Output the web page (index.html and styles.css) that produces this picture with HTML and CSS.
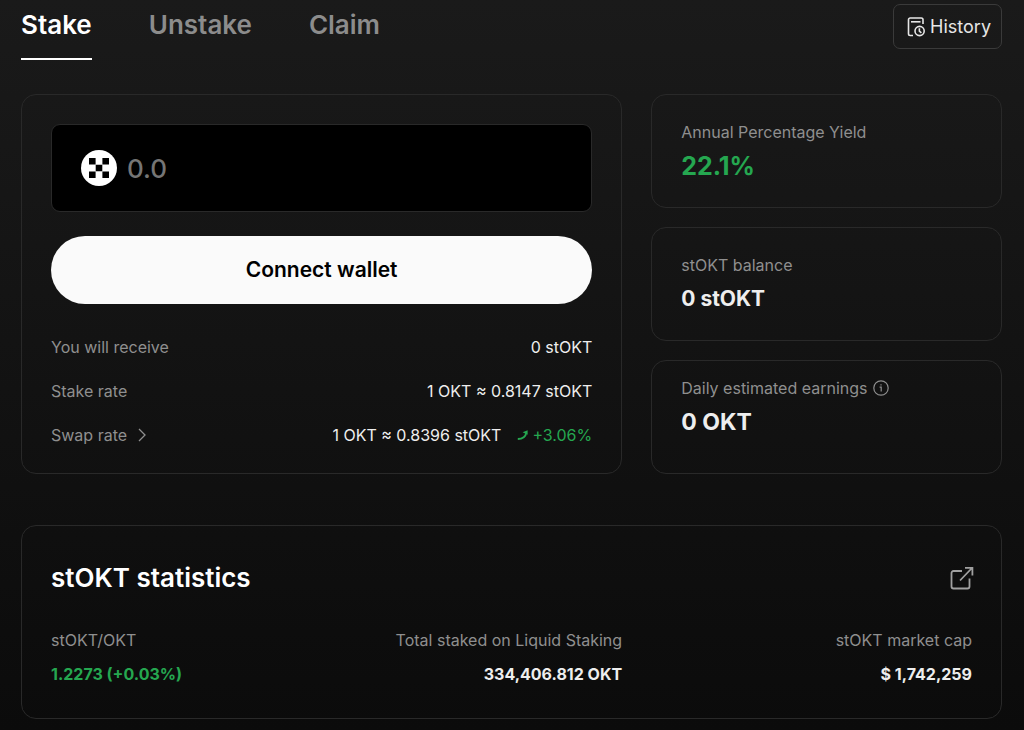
FILE: index.html
```html
<!DOCTYPE html>
<html lang="en">
<head>
    <meta charset="UTF-8">
    <meta name="viewport" content="width=device-width, initial-scale=1.0">
    <title>Liquid Staking</title>
    <link rel="stylesheet" href="styles.css">
</head>
<body>
    <header class="header">
        <nav class="tabs">
            <a href="#stake" class="tab active">Stake</a>
            <a href="#unstake" class="tab">Unstake</a>
            <a href="#claim" class="tab">Claim</a>
        </nav>
        <button class="history-button" type="button">
            <svg width="18" height="20" viewBox="0 0 18 20" fill="none" stroke="currentColor" stroke-width="1.6">
                <path d="M6 18.5H3.2A1.7 1.7 0 0 1 1.5 16.8V2.7A1.7 1.7 0 0 1 3.2 1H14.3A1.7 1.7 0 0 1 16 2.7V7"/>
                <path d="M4 4.8H13.5"/>
                <circle cx="12.6" cy="14" r="4.6"/>
                <path d="M12.4 11.2V14.2L14.4 15.8"/>
            </svg>
            History
        </button>
    </header>

    <main>
        <div class="overview">
            <form class="card stake-card">
                <div class="amount-box">
                    <svg class="token-logo" width="36" height="36" viewBox="0 0 36 36">
                        <circle cx="18" cy="18" r="18" fill="#fff"/>
                        <path d="M8 8h6.6v6.6H8zM21.4 8H28v6.6h-6.6zM14.7 14.7h6.6v6.6h-6.6zM8 21.4h6.6V28H8zM21.4 21.4H28V28h-6.6z" fill="#000"/>
                    </svg>
                    <input class="amount-input" type="text" inputmode="decimal" placeholder="0.0" aria-label="Amount to stake">
                </div>
                <button class="connect-button" type="button">Connect wallet</button>
                <dl class="rates">
                    <div class="rate-row">
                        <dt>You will receive</dt>
                        <dd>0 stOKT</dd>
                    </div>
                    <div class="rate-row">
                        <dt>Stake rate</dt>
                        <dd>1 OKT ≈ 0.8147 stOKT</dd>
                    </div>
                    <div class="rate-row">
                        <dt>
                            <a href="#swap" class="swap-link">Swap rate
                                <svg width="8" height="14" viewBox="0 0 8 14" fill="none" stroke="currentColor" stroke-width="1.3">
                                    <path d="M1 1L7 7L1 13"/>
                                </svg>
                            </a>
                        </dt>
                        <dd>1 OKT ≈ 0.8396 stOKT
                            <span class="change">
                                <svg width="12" height="12" viewBox="0 0 12 12" fill="none" stroke="currentColor" stroke-width="1.8">
                                    <path d="M0.8 10C4.5 10 8.5 8.4 9.4 3.5"/>
                                    <path d="M5.6 3.2L10.6 1.2V5.8Z" fill="currentColor" stroke="none"/>
                                </svg>
                                +3.06%
                            </span>
                        </dd>
                    </div>
                </dl>
            </form>

            <div class="summary">
                <section class="card summary-card">
                    <h2 class="label">Annual Percentage Yield</h2>
                    <p class="value value-yield green">22.1%</p>
                </section>
                <section class="card summary-card">
                    <h2 class="label">stOKT balance</h2>
                    <p class="value">0 stOKT</p>
                </section>
                <section class="card summary-card top">
                    <h2 class="label">Daily estimated earnings
                        <svg width="16" height="16" viewBox="0 0 16 16" fill="none" stroke="currentColor" stroke-width="1.2">
                            <circle cx="8" cy="8" r="7.2"/>
                            <path d="M6.6 7.2H8.2V11.6M8 4.2V5.6"/>
                        </svg>
                    </h2>
                    <p class="value value-earnings">0 OKT</p>
                </section>
            </div>
        </div>

        <section class="card stats-card">
            <div class="stats-header">
                <h2>stOKT statistics</h2>
                <a href="#statistics" class="external-link" aria-label="Open statistics">
                    <svg width="24" height="24" viewBox="0 0 24 24" fill="none" stroke="currentColor" stroke-width="1.8">
                        <path d="M12 5H3.5A2 2 0 0 0 1.5 7V20.5A2 2 0 0 0 3.5 22.5H17.5A2 2 0 0 0 19.5 20.5V12.5"/>
                        <path d="M10 14.5L22 2M15 1.8H22.4V9.5"/>
                    </svg>
                </a>
            </div>
            <div class="stats">
                <div class="stat">
                    <h3 class="label">stOKT/OKT</h3>
                    <p class="green">1.2273 (+0.03%)</p>
                </div>
                <div class="stat">
                    <h3 class="label">Total staked on Liquid Staking</h3>
                    <p>334,406.812 OKT</p>
                </div>
                <div class="stat">
                    <h3 class="label">stOKT market cap</h3>
                    <p>$ 1,742,259</p>
                </div>
            </div>
        </section>
    </main>
</body>
</html>
```
FILE: styles.css
```css
* {
    box-sizing: border-box;
}
html {
    min-height: 100%;
    background: linear-gradient(#1a1a1a, #0b0b0b);
}
body {
    margin: 0;
    padding: 0 22px 11px 21px;
    font-family: Inter, "Liberation Sans", sans-serif;
    font-size: 16px;
    line-height: 24px;
    color: #eee;
}
h2, h3, p, dl, dd {
    margin: 0;
}
a {
    color: inherit;
    text-decoration: none;
}
button, input {
    font-family: inherit;
}
svg {
    flex: none;
}
.header {
    display: flex;
    justify-content: space-between;
    align-items: flex-start;
    margin-bottom: 34px;
}
.tabs {
    display: flex;
    gap: 57px;
}
.tab {
    padding: 8px 0 16px;
    border-bottom: 2px solid transparent;
    font-size: 26px;
    line-height: 34px;
    font-weight: 600;
    color: #8c8c8c;
}
.tab.active {
    color: #fff;
    border-color: #fff;
}
.history-button {
    display: flex;
    align-items: center;
    gap: 5px;
    height: 45px;
    margin-top: 4px;
    padding: 0 10px 0 13px;
    border: 1px solid #3a3a3a;
    border-radius: 7px;
    background: none;
    font-size: 18px;
    color: #e6e6e6;
    cursor: pointer;
}
.card {
    border: 1px solid #292929;
    border-radius: 15px;
}
.overview {
    display: grid;
    grid-template-columns: 12fr 7fr;
    gap: 29px;
    margin-bottom: 51px;
}
.stake-card {
    padding: 29px 29px 26px;
}
.amount-box {
    display: flex;
    align-items: center;
    gap: 10px;
    height: 88px;
    margin-bottom: 24px;
    padding: 0 29px;
    border: 1px solid #292929;
    border-radius: 9px;
    background: #000;
}
.amount-input {
    flex: 1;
    min-width: 0;
    padding: 0;
    border: 0;
    outline: none;
    background: none;
    font-size: 26px;
    font-weight: 500;
    color: #fff;
}
.amount-input::placeholder {
    color: #757575;
}
.connect-button {
    display: block;
    width: 100%;
    height: 68px;
    margin-bottom: 31px;
    padding: 0 0 2px;
    border: 0;
    border-radius: 34px;
    background: #fafafa;
    font-size: 21px;
    font-weight: 600;
    color: #000;
    cursor: pointer;
}
.rates {
    display: flex;
    flex-direction: column;
    gap: 20px;
}
.rate-row {
    display: flex;
    justify-content: space-between;
}
.rate-row dt {
    color: #8f8f8f;
}
.rate-row dd {
    display: flex;
    gap: 16px;
}
.swap-link {
    display: flex;
    align-items: center;
    gap: 11px;
}
.change {
    display: flex;
    align-items: center;
    gap: 3px;
    color: #25a750;
}
.summary {
    display: grid;
    grid-template-rows: repeat(3, 1fr);
    gap: 19px;
}
.summary-card {
    padding: 25px 29px 0;
}
.summary-card.top {
    padding-top: 15px;
}
.label {
    display: flex;
    align-items: center;
    gap: 6px;
    font-size: 16px;
    font-weight: 400;
    color: #8f8f8f;
}
.value {
    margin-top: 6px;
    font-size: 21px;
    line-height: 32px;
    font-weight: 700;
}
.value-yield {
    font-size: 25px;
}
.value-earnings {
    font-size: 23px;
}
.green {
    color: #25a750;
}
.stats-card {
    padding: 36px 29px 32px;
}
.stats-header {
    display: flex;
    justify-content: space-between;
    align-items: center;
    margin-bottom: 34px;
}
.stats-header h2 {
    font-size: 26px;
    line-height: 32px;
    font-weight: 600;
    color: #fff;
}
.external-link {
    display: flex;
    color: #a0a0a0;
    margin-right: -2px;
}
.stats {
    display: flex;
    justify-content: space-between;
}
.stat {
    text-align: right;
}
.stat .label {
    justify-content: flex-end;
}
.stat:first-child {
    text-align: left;
}
.stat:first-child .label {
    justify-content: flex-start;
}
.stat p {
    margin-top: 10px;
    font-weight: 700;
}
```
